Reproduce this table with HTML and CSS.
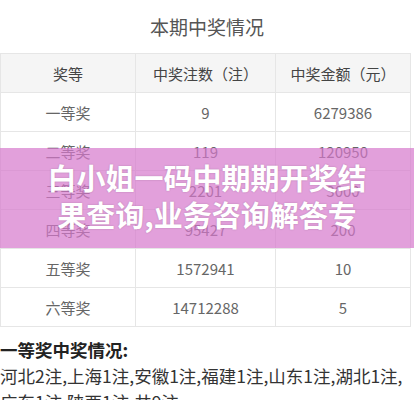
FILE: index.html
```html
<!DOCTYPE html>
<html lang="zh-CN">
<head>
    <meta charset="UTF-8">
    <meta name="viewport" content="width=device-width, initial-scale=1.0">
    <title>本期中奖情况</title>
    <link rel="stylesheet" href="styles.css">
</head>
<body>
    <!-- Prize Table -->
    <div class="prize-box">
        <h2 class="prize-title">本期中奖情况</h2>
        <table class="prize-table">
            <thead>
                <tr>
                    <th>奖等</th>
                    <th>中奖注数（注）</th>
                    <th>中奖金额（元）</th>
                </tr>
            </thead>
            <tbody>
                <tr><td>一等奖</td><td>9</td><td>6279386</td></tr>
                <tr><td>二等奖</td><td>119</td><td>120950</td></tr>
                <tr><td>三等奖</td><td>2201</td><td>3000</td></tr>
                <tr><td>四等奖</td><td>95427</td><td>200</td></tr>
                <tr><td>五等奖</td><td>1572941</td><td>10</td></tr>
                <tr><td>六等奖</td><td>14712288</td><td>5</td></tr>
            </tbody>
        </table>

        <!-- Banner over the table -->
        <div class="banner">
            <p>白小姐一码中期期开奖结<br>果查询,业务咨询解答专</p>
        </div>
    </div>

    <!-- First Prize Detail -->
    <div class="detail">
        <h3>一等奖中奖情况:</h3>
        <p>河北2注,上海1注,安徽1注,福建1注,山东1注,湖北1注,广东1注,陕西1注,共9注</p>
    </div>
</body>
</html>
```
FILE: styles.css
```css
/* General Styles */
body {
    margin: 0;
    padding: 0;
    background: #fff;
    color: #333;
    font-family: "Noto Sans CJK SC", "Noto Sans", sans-serif;
    overflow: hidden;
}

/* Prize Table */
.prize-box {
    position: relative;
}

.prize-title {
    margin: 0;
    padding: 13px 0 12px;
    text-align: center;
    font-size: 19px;
    line-height: 28px;
    font-weight: normal;
    color: #555;
}

.prize-table {
    width: 411px;
    border-collapse: collapse;
    table-layout: fixed;
    font-size: 15px;
}

.prize-table th,
.prize-table td {
    height: 38px;
    padding: 0;
    border: 1px solid #e6e6e6;
    text-align: center;
    font-weight: normal;
    color: #666;
}

.prize-table th {
    background: #f5f5f5;
    color: #444;
}

.prize-table th:nth-child(1) { width: 134px; }
.prize-table th:nth-child(2) { width: 139px; }

/* Banner */
.banner {
    position: absolute;
    top: 148px;
    left: 0;
    right: 0;
    height: 100px;
    display: flex;
    align-items: center;
    justify-content: center;
    background: rgba(214, 120, 204, 0.7);
}

.banner p {
    margin: 0 0 5px;
    text-align: center;
    font-size: 29px;
    line-height: 37px;
    font-weight: bold;
    color: #fff;
    text-shadow: 0 0 2px rgba(0, 0, 0, 0.2);
}

/* First Prize Detail */
.detail {
    margin-top: 10px;
    font-size: 17.5px;
    line-height: 26px;
    color: #333;
}

.detail h3 {
    margin: 0;
    font-size: 17.5px;
    line-height: 26px;
    font-weight: bold;
    color: #222;
}

.detail p {
    margin: 0;
    width: 412px;
}
```
